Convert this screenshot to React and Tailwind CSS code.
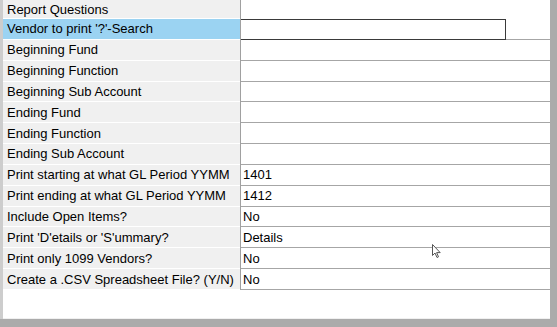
import React from 'react';

const rows = [
  { label: 'Report Questions', value: '', header: true },
  { label: "Vendor to print '?'-Search", value: '', selected: true },
  { label: 'Beginning Fund', value: '' },
  { label: 'Beginning Function', value: '' },
  { label: 'Beginning Sub Account', value: '' },
  { label: 'Ending Fund', value: '' },
  { label: 'Ending Function', value: '' },
  { label: 'Ending Sub Account', value: '' },
  { label: 'Print starting at what GL Period YYMM', value: '1401' },
  { label: 'Print ending at what GL Period YYMM', value: '1412' },
  { label: 'Include Open Items?', value: 'No' },
  { label: "Print 'D'etails or 'S'ummary?", value: 'Details' },
  { label: 'Print only 1099 Vendors?', value: 'No' },
  { label: 'Create a .CSV Spreadsheet File? (Y/N)', value: 'No' },
];

const Row = ({ row }) => {
  const height = row.header ? 'h-[19px]' : 'h-[20.85px]';
  return (
    <div className={`flex ${height}`}>
      <div
        className={`w-[237px] shrink-0 flex items-center pl-[4px] border-b border-white ${
          row.selected ? 'bg-[#9bd3f2]' : 'bg-[#f0f0f0]'
        }`}
      >
        <span className="whitespace-nowrap">{row.label}</span>
      </div>
      <div className="w-px shrink-0 bg-[#a0a0a0]" />
      {row.selected ? (
        <div className="flex-1 flex">
          <div className="w-[265px] border border-[#3a3a3a] border-l-0 bg-white" />
          <div className="flex-1 border-b border-[#a6a6a6]" />
        </div>
      ) : (
        <div
          className={`flex-1 flex items-center pl-[2px] bg-white ${
            row.header ? '' : 'border-b border-[#a6a6a6]'
          }`}
        >
          {row.value}
        </div>
      )}
    </div>
  );
};

export default function App() {
  return (
    <div
      className="relative w-[557px] h-[327px] bg-[#ababab] overflow-hidden text-[13px] text-black leading-none"
      style={{ fontFamily: '"Liberation Sans", Arial, sans-serif' }}
    >
      <div className="flex w-[550px] h-[319px] bg-white">
        <div className="w-[3px] shrink-0 bg-[#cdcdcd]" />
        <div className="flex-1 flex flex-col">
          {rows.map((row, i) => (
            <Row key={i} row={row} />
          ))}
          <div className="flex-1 bg-white" />
          <div className="h-px bg-[#f0f0f0]" />
        </div>
      </div>
      <svg
        className="absolute left-[432px] top-[244px]"
        width="10"
        height="15"
        viewBox="0 0 10 15"
      >
        <path
          d="M0.5 0.5 L0.5 11.5 L3 9 L5 13.5 L6.5 12.8 L4.6 8.6 L8.2 8.6 Z"
          fill="white"
          stroke="#555"
          strokeWidth="1"
          strokeLinejoin="round"
        />
      </svg>
    </div>
  );
}
